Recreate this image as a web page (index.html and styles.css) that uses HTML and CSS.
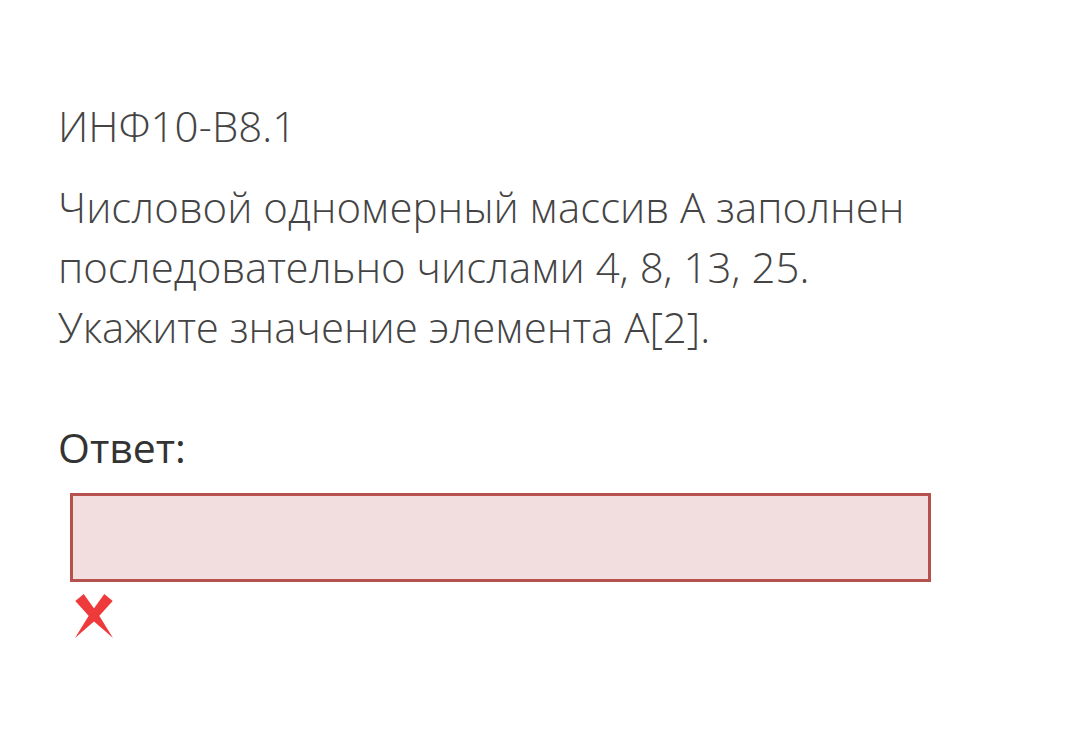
FILE: index.html
```html
<!DOCTYPE html>
<html lang="ru">
<head>
<meta charset="utf-8">
<link rel="stylesheet" href="styles.css">
</head>
<body>
<main class="task">
  <h1 class="task-id">ИНФ10-B8.1</h1>
  <p class="task-text">Числовой одномерный массив A заполнен последовательно числами 4, 8, 13, 25. Укажите значение элемента A[2].</p>
  <div class="answer">
    <div class="answer-label">Ответ:</div>
    <div class="answer-field"></div>
    <svg class="wrong" width="40" height="45" viewBox="0 0 40 45">
      <polygon points="0.3,7 8.7,0 24.1,21.5 38,44 17.9,26.5" fill="#ee3a3a"/>
      <polygon points="29.3,0 37.7,7 20.1,26.5 0,44 13.9,21.5" fill="#ee3a3a"/>
    </svg>
  </div>
</main>
</body>
</html>
```
FILE: styles.css
```css
html, body {
  margin: 0;
  padding: 0;
  background: #fff;
}
body {
  font-family: "Open Sans", "Liberation Sans", sans-serif;
  color: #333;
}
.task {
  padding: 96px 0 0 58px;
  width: 870px;
}
.task-id {
  margin: 0;
  font-family: "Open Sans Light", "Open Sans", sans-serif;
  font-size: 42px;
  font-weight: 300;
  line-height: 60px;
  color: #444;
}
.task-text {
  margin: 21px 0 0 0;
  font-family: "Open Sans Light", "Open Sans", sans-serif;
  font-size: 42px;
  font-weight: 300;
  line-height: 60px;
  color: #444;
}
.answer {
  margin-top: 60px;
  display: flex;
  flex-direction: column;
  align-items: flex-start;
}
.answer-label {
  font-size: 41px;
  font-weight: 400;
  line-height: 60px;
}
.answer-field {
  margin: 16px 0 0 12px;
  box-sizing: border-box;
  width: 861px;
  height: 89px;
  background: #f2dedf;
  border: 3px solid #b7514e;
}
.wrong {
  margin: 12px 0 0 17px;
  display: block;
}
```
